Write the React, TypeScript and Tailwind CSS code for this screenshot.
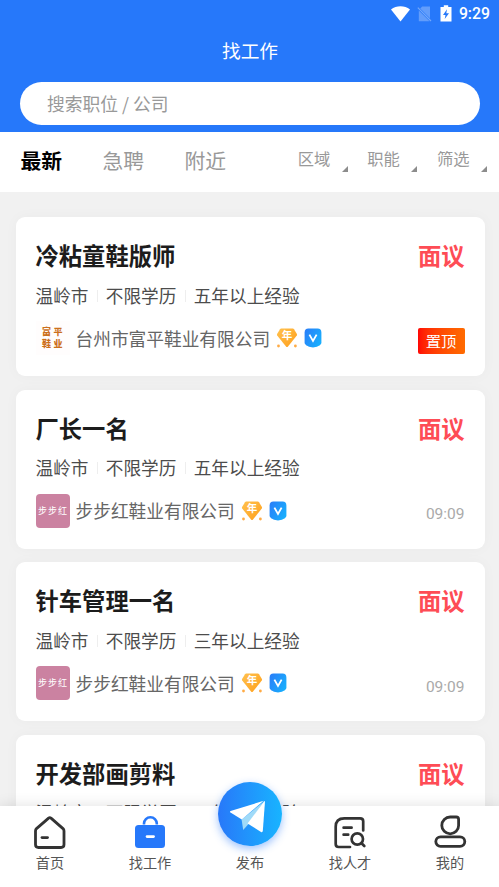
import React from "react";

const jobs = [
  { title: "冷粘童鞋版师", exp: "五年以上经验", company: "台州市富平鞋业有限公司", top: true, time: "" },
  { title: "厂长一名", exp: "五年以上经验", company: "步步红鞋业有限公司", top: false, time: "09:09" },
  { title: "针车管理一名", exp: "三年以上经验", company: "步步红鞋业有限公司", top: false, time: "09:09" },
  { title: "开发部画剪料", exp: "五年以上经验", company: "步步红鞋业有限公司", top: false, time: "09:09" },
];

function StatusBar() {
  return (
    <div className="flex h-[28px] items-center justify-end pr-[10px] text-white">
      <svg className="mr-[7px] h-[16px] w-[19px]" viewBox="0 0 19 16" fill="#fff">
        <path d="M0 3.6C5.4-.8 13.6-.8 19 3.6L9.5 15.6Z" />
      </svg>
      <svg className="mr-[8px] h-[16px] w-[15px]" viewBox="0 0 15 16">
        <path d="M5.2 .5H13v11.8L3.2 2.5Z M1.8 4.4 12.6 15.2H1.8Z" fill="#fff" opacity=".28" />
        <path d="M.8 1.6 14 15" stroke="#fff" strokeWidth="1.2" opacity=".35" />
      </svg>
      <svg className="mr-[7px] -mt-[2px] h-[17px] w-[12px]" viewBox="0 0 12 17">
        <path d="M.5 2H3.8V.3h4.4V2h3.3v14.6H.5Z" fill="#fff" />
        <path d="M7 4.2 3 10h2.5l-.8 4L9 8.2H6.3Z" fill="#2678fa" />
      </svg>
      <span className="font-[Roboto] text-[15.8px] leading-[20px] font-medium">9:29</span>
    </div>
  );
}

function FilterItem({ label }: { label: string }) {
  return (
    <div className="flex w-[69.7px]">
      <span className="text-[16.3px] leading-[23px]">{label}</span>
      <svg className="mt-[19px] ml-[11.4px] h-[6px] w-[6px]" viewBox="0 0 6 6">
        <path d="M6 0V6H0Z" fill="#8c8c8c" />
      </svg>
    </div>
  );
}

function YearBadge() {
  return (
    <svg className="h-[20px] w-[22px] shrink-0" viewBox="0 0 22 20">
      <defs>
        <linearGradient id="gem" x1="0" y1="0" x2="1" y2="1">
          <stop offset="0" stopColor="#ffc14d" />
          <stop offset="1" stopColor="#ff9f1c" />
        </linearGradient>
      </defs>
      <path d="M5.2 .6H16.8Q17.6 .6 18 1.2L20.9 6Q21.3 6.7 20.8 7.4L12 18.4Q11 19.4 10 18.4L1.2 7.4Q.7 6.7 1.1 6L4 1.2Q4.4 .6 5.2 .6Z" fill="url(#gem)" />
      <circle cx="2.5" cy="18" r="1.4" fill="#ffab45" />
      <circle cx="19.4" cy="18" r="1.4" fill="#ffab45" />
      <text x="11" y="11.4" textAnchor="middle" fontSize="10.5" fontWeight="700" fill="#fff" fontFamily="'Noto Sans CJK SC', sans-serif">年</text>
    </svg>
  );
}

function VerifiedBadge() {
  return (
    <svg className="ml-[6px] h-[20px] w-[18px] shrink-0" viewBox="0 0 18 20">
      <defs>
        <linearGradient id="shield" x1="0" y1="0" x2="1" y2=".6">
          <stop offset="0" stopColor="#2a7cf8" />
          <stop offset="1" stopColor="#19adfd" />
        </linearGradient>
      </defs>
      <path d="M4.4 .6H13.6Q17.4 .6 17.4 4.4V14.8C17.4 17.4 12 19.5 9 19.5S.6 17.4 .6 14.8V4.4Q.6 .6 4.4 .6Z" fill="url(#shield)" />
      <path d="M5.4 6.6 9 13 12.6 6.6" fill="none" stroke="#fff" strokeWidth="1.8" />
    </svg>
  );
}

function JobCard({ job }: { job: (typeof jobs)[number] }) {
  return (
    <article className="h-[159px] shrink-0 rounded-[9px] bg-white px-[20px] pt-[22px] shadow-[0_0_14px_rgba(0,0,0,0.03)]">
      <div className="flex h-[32px] items-center justify-between text-[23.3px] leading-[32px]">
        <h2 className="font-bold text-[#1c1c1c]">{job.title}</h2>
        <span className="font-bold text-[#fe4c55]">面议</span>
      </div>
      <div className="mt-[12.5px] flex h-[24px] items-center text-[17.65px] leading-[24px] text-[#4c4c4c]">
        <span>温岭市</span>
        <i className="mx-[8.2px] h-[12px] w-px bg-[#eeeeee]" />
        <span>不限学历</span>
        <i className="mx-[8.2px] h-[12px] w-px bg-[#eeeeee]" />
        <span>{job.exp}</span>
      </div>
      <div className="mt-[13.9px] flex h-[34px] items-center">
        {job.top ? (
          <div className="grid h-[34px] w-[34px] place-content-center bg-[#fffdfd] pl-[2px] text-[9px] leading-[12px] font-black tracking-[2.5px] text-[#cc701c]">
            <span>富平</span>
            <span>鞋业</span>
          </div>
        ) : (
          <div className="flex h-[34px] w-[34px] items-center justify-center rounded-[4px] bg-[#cb82a1] pl-px text-[9px] leading-[12px] tracking-[1px] whitespace-nowrap text-white">
            步步红
          </div>
        )}
        <span className="-mt-px mr-[6.2px] ml-[6px] text-[17.7px] leading-[24px] text-[#666]">{job.company}</span>
        <YearBadge />
        <VerifiedBadge />
        {job.top ? (
          <span className="mt-[6px] ml-auto h-[26px] w-[47px] rounded-[2px] bg-linear-to-r from-[#ff0505] to-[#ff6b00] text-center text-[15.3px] leading-[25px] text-white">置顶</span>
        ) : (
          <span className="mt-[7px] ml-auto font-[Roboto] text-[15.5px] leading-[20px] text-[#aaa]">{job.time}</span>
        )}
      </div>
    </article>
  );
}

function HomeIcon() {
  return (
    <svg className="h-[36px] w-[36px]" viewBox="0 0 36 36" fill="none" stroke="#333" strokeWidth="2.8" strokeLinejoin="round" strokeLinecap="round">
      <path d="M16.6 3.1Q17.8 2.2 19 3.1L31 13.6Q32 14.6 32 16V29.5Q32 32.5 29 32.5H6.5Q3.5 32.5 3.5 29.5V16Q3.5 14.6 4.5 13.6Z" />
      <path d="M10 22.6H15.5" />
    </svg>
  );
}

function BagIcon() {
  return (
    <svg className="h-[36px] w-[36px]" viewBox="0 0 36 36" fill="none">
      <path d="M12 9.4V8.6a6.4 6.4 0 0 1 12.8 0v.8" stroke="#2678fa" strokeWidth="2.6" />
      <rect x="3" y="10" width="30" height="23" rx="3.5" fill="#2678fa" />
      <path d="M15 21.6H21.6" stroke="#fff" strokeWidth="2.6" strokeLinecap="round" />
    </svg>
  );
}

function TalentIcon() {
  return (
    <svg className="h-[36px] w-[36px]" viewBox="0 0 36 36" fill="none" stroke="#333" strokeWidth="2.7" strokeLinecap="round" strokeLinejoin="round">
      <path d="M31.2 15.5V6.3Q31.2 3.3 28.2 3.3H12.3Q3.7 3.3 3.7 11.8V29Q3.7 32 6.7 32H18" />
      <path d="M11.6 12.7H19.6M11.6 19.7H16.2" />
      <circle cx="25.3" cy="24" r="5.7" />
      <path d="M29.8 28.5 32.3 31" />
    </svg>
  );
}

function ProfileIcon() {
  return (
    <svg className="h-[36px] w-[36px]" viewBox="0 0 36 36" fill="none" stroke="#333" strokeWidth="2.8" strokeLinejoin="round">
      <path d="M18.2 2H24.2Q26.6 2 26.6 4.4V10.4A8.4 8.4 0 1 1 18.2 2Z" />
      <rect x="3.8" y="21.8" width="29" height="9.6" rx="4.8" />
    </svg>
  );
}

function PublishIcon() {
  return (
    <svg className="h-[64px] w-[64px]" viewBox="0 0 64 64">
      <defs>
        <linearGradient id="disc">
          <stop offset="0" stopColor="#2878f9" />
          <stop offset="1" stopColor="#18b4ff" />
        </linearGradient>
      </defs>
      <circle cx="32" cy="32" r="32" fill="url(#disc)" />
      <path d="M23.6 37.5 46 19.5 30.5 42 25.2 48Z" fill="#9fdaf8" />
      <path d="M12.6 29 45.6 18.8 23.8 37.4 12.5 30.6Q11.5 29.6 12.6 29Z" fill="#fff" />
      <path d="M47 19.6 44.8 49Q44.5 50.7 43 49.9L29.6 41.6 46 19.4Q46.8 18.6 47 19.6Z" fill="#fff" />
    </svg>
  );
}

function NavItem({ label, children }: { label: string; children: React.ReactNode }) {
  return (
    <div className="flex w-[100px] flex-col items-center pt-[9px]">
      {children}
      <span className="mt-px text-[14.2px] leading-[20px]">{label}</span>
    </div>
  );
}

export default function App() {
  return (
    <div className="flex h-[887px] w-[499px] flex-col overflow-hidden bg-[#f1f1f1] font-['Noto_Sans_CJK_SC',sans-serif]">
      <header className="h-[132px] w-[500px] shrink-0 bg-[#2678fa]">
        <StatusBar />
        <h1 className="mt-[8px] h-[28px] text-center text-[18.7px] leading-[28px] text-white">找工作</h1>
        <div className="mx-[20px] mt-[18px] h-[43px] rounded-full bg-white pl-[27px] text-[17.75px] leading-[42px] text-[#999]">搜索职位 / 公司</div>
      </header>

      <div className="flex h-[60px] w-[500px] shrink-0 bg-white pl-[20.5px] text-[#999]">
        <div className="flex pt-[13px] text-[20.8px] leading-[30px]">
          <span className="w-[82px] font-bold text-black">最新</span>
          <span className="w-[82px]">急聘</span>
          <span>附近</span>
        </div>
        <div className="ml-auto flex pt-[15px] pr-px">
          <FilterItem label="区域" />
          <FilterItem label="职能" />
          <div className="w-[62px]"><FilterItem label="筛选" /></div>
        </div>
      </div>

      <main className="flex h-[614px] w-[500px] shrink-0 flex-col gap-[13.5px] overflow-hidden px-[15.5px] pt-[25px]">
        {jobs.map((job) => (
          <JobCard key={job.title} job={job} />
        ))}
      </main>

      <nav className="relative flex h-[81px] w-[500px] shrink-0 bg-white text-[#555] shadow-[0_0_14px_rgba(0,0,0,0.12)]">
        <NavItem label="首页"><HomeIcon /></NavItem>
        <NavItem label="找工作"><BagIcon /></NavItem>
        <NavItem label="发布">
          <div className="-mt-[33px] mb-[5px] h-[64px] rounded-full shadow-[0_3px_9px_rgba(38,120,250,0.45)]"><PublishIcon /></div>
        </NavItem>
        <NavItem label="找人才"><TalentIcon /></NavItem>
        <NavItem label="我的"><ProfileIcon /></NavItem>
      </nav>
    </div>
  );
}
